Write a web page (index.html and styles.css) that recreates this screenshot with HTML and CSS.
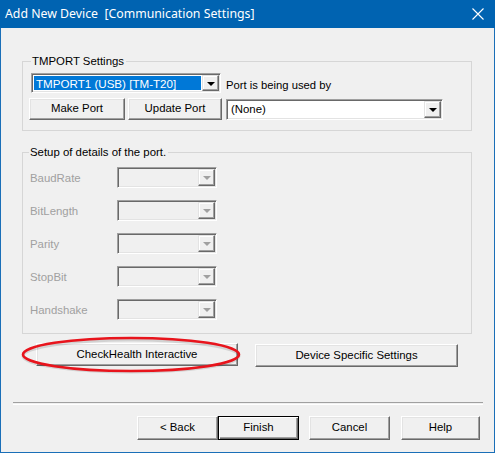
FILE: index.html
```html
<!DOCTYPE html>
<html>
<head>
<meta charset="utf-8">
<link rel="stylesheet" href="styles.css">
</head>
<body>
<div class="window">
  <div class="titlebar">
    <span class="title">Add New Device&nbsp; [Communication Settings]</span>
    <svg class="close" width="12" height="12" viewBox="0 0 12 12"><path d="M0.5 0.5 L11.5 11.5 M11.5 0.5 L0.5 11.5" stroke="#fff" stroke-width="1.1" fill="none"/></svg>
  </div>
  <div class="client">
    <fieldset class="group g1">
      <legend>TMPORT Settings</legend>
      <div class="row r1">
        <div class="combo port"><span class="sel">TMPORT1 (USB) [TM-T20]</span><span class="drop"><i class="tri"></i></span></div>
        <span class="lbl">Port is being used by</span>
      </div>
      <div class="row r2">
        <button class="btn make">Make Port</button>
        <button class="btn update">Update Port</button>
        <div class="combo none"><span class="val">(None)</span><span class="drop"><i class="tri"></i></span></div>
      </div>
    </fieldset>
    <fieldset class="group g2">
      <legend>Setup of details of the port.</legend>
      <div class="prow"><span class="plabel">BaudRate</span><div class="combo dis"><span class="val"></span><span class="drop"><i class="tri"></i></span></div></div>
      <div class="prow"><span class="plabel">BitLength</span><div class="combo dis"><span class="val"></span><span class="drop"><i class="tri"></i></span></div></div>
      <div class="prow"><span class="plabel">Parity</span><div class="combo dis"><span class="val"></span><span class="drop"><i class="tri"></i></span></div></div>
      <div class="prow"><span class="plabel">StopBit</span><div class="combo dis"><span class="val"></span><span class="drop"><i class="tri"></i></span></div></div>
      <div class="prow"><span class="plabel">Handshake</span><div class="combo dis"><span class="val"></span><span class="drop"><i class="tri"></i></span></div></div>
    </fieldset>
    <div class="actions">
      <div class="hl">
        <button class="btn wide check">CheckHealth Interactive</button>
        <svg class="ring" width="224" height="40" viewBox="0 0 224 40"><ellipse cx="112" cy="21" rx="108" ry="16" fill="none" stroke="rgba(0,0,0,0.12)" stroke-width="3"/><ellipse cx="112" cy="19.5" rx="108" ry="16.5" fill="none" stroke="#e8141c" stroke-width="2.6"/></svg>
      </div>
      <button class="btn wide dev">Device Specific Settings</button>
    </div>
    <div class="sep"></div>
    <div class="footer">
      <button class="btn fbtn">&lt; Back</button>
      <button class="btn fbtn default">Finish</button>
      <button class="btn fbtn cancel">Cancel</button>
      <button class="btn fbtn help">Help</button>
    </div>
  </div>
</div>
</body>
</html>
```

FILE: styles.css
```css
html, body {
  margin: 0;
  padding: 0;
  background: #ffffff;
}
body {
  width: 495px;
  height: 454px;
  overflow: hidden;
}
.window {
  width: 493px;
  height: 452px;
  border: 1px solid #1a6fb8;
  border-top: none;
  background: #f0f0f0;
  display: flex;
  flex-direction: column;
  font-family: "Liberation Sans", Arial, sans-serif;
  font-size: 11.4px;
  color: #000;
}
.titlebar {
  height: 28px;
  margin: 0 -1px;
  background: #0063b1;
  display: flex;
  align-items: center;
  justify-content: space-between;
  padding: 0 11px 0 5px;
  flex-shrink: 0;
}
.title {
  font-family: "Noto Sans", "Open Sans", sans-serif;
  font-size: 12.3px;
  color: #fff;
  margin-top: -1px;
}
.close {
  display: block;
}
.client {
  padding: 0 0 0 21px;
  display: flex;
  flex-direction: column;
  flex: 1;
}
.group {
  margin: 0;
  padding: 0 8px;
  border: 1px solid #d6d6d6;
  box-sizing: border-box;
  width: 450px;
}
.group legend {
  padding: 0 2px 0 1px;
  line-height: 13px;
  font-size: 11.4px;
}
.g1 {
  margin-top: 27px;
  padding-top: 5px;
  padding-bottom: 10px;
}
.g2 {
  margin-top: 15px;
  padding-top: 8px;
  padding-bottom: 13px;
}
.g2 legend {
  margin-left: -2px;
}
.row {
  display: flex;
  align-items: center;
}
.r2 {
  margin-top: 5px;
}
.combo {
  display: flex;
  box-sizing: border-box;
  border: 1px solid;
  border-color: #a0a0a0 #ffffff #ffffff #a0a0a0;
  box-shadow: inset 1px 1px 0 #696969, inset -1px -1px 0 #e3e3e3;
  background: #fff;
  padding: 2px;
}
.combo .sel, .combo .val {
  flex: 1;
  display: flex;
  align-items: center;
  padding-left: 2px;
  white-space: nowrap;
  overflow: hidden;
}
.combo .sel {
  background: #0078d7;
  color: #fff;
  margin-right: 1px;
  font-size: 11.6px;
}
.drop {
  width: 17px;
  flex-shrink: 0;
  box-sizing: border-box;
  background: #f0f0f0;
  border: 1px solid;
  border-color: #e3e3e3 #696969 #696969 #e3e3e3;
  box-shadow: inset -1px -1px 0 #a0a0a0, inset 1px 1px 0 #ffffff;
  display: flex;
  align-items: center;
  justify-content: center;
  margin: -1px -1px -1px 0;
}
.tri {
  width: 0;
  height: 0;
  border-left: 4px solid transparent;
  border-right: 4px solid transparent;
  border-top: 4px solid #000;
  margin-top: 1px;
}
.port {
  width: 190px;
  height: 20px;
}
.lbl {
  margin-left: 5px;
  margin-top: 3px;
  font-size: 11.25px;
}
.btn {
  font-family: "Liberation Sans", Arial, sans-serif;
  font-size: 11.4px;
  color: #000;
  background: #f0f0f0;
  box-sizing: border-box;
  border: 1px solid;
  border-color: #ffffff #696969 #696969 #ffffff;
  box-shadow: inset -1px -1px 0 #a0a0a0, inset 1px 1px 0 #e3e3e3;
  padding: 0;
  margin: 0;
  line-height: 1;
}
.make {
  width: 96px;
  height: 22px;
  margin-left: -2px;
}
.update {
  width: 94px;
  height: 22px;
  margin-left: 3px;
}
.none {
  width: 217px;
  height: 21px;
  margin-left: 4px;
}
.prow {
  display: flex;
  align-items: center;
  height: 21px;
  margin-bottom: 12px;
}
.prow:last-child {
  margin-bottom: 0;
}
.plabel {
  width: 87px;
  margin-left: -1px;
  color: #a0a0a0;
  padding-top: 1px;
  font-size: 11.4px;
}
.combo.dis {
  width: 100px;
  height: 21px;
  background: #f0f0f0;
}
.combo.dis .tri {
  border-top-color: #a0a0a0;
}
.actions {
  display: flex;
  align-items: flex-start;
  margin-top: 9px;
}
.hl {
  position: relative;
  margin-left: 14px;
}
.btn.wide {
  height: 23px;
}
.check {
  width: 202px;
}
.dev {
  width: 203px;
  margin-left: 17px;
  margin-top: 1px;
  height: 22px;
}
.ring {
  position: absolute;
  left: -17px;
  top: -8px;
  pointer-events: none;
}
.sep {
  margin: 35px 0 0 -9px;
  width: 470px;
  height: 1px;
  border-top: 1px solid #a0a0a0;
  border-bottom: 1px solid #ffffff;
}
.footer {
  display: flex;
  margin-top: 11px;
  padding-left: 115px;
}
.fbtn {
  width: 81px;
  height: 24px;
}
.default {
  border: 1px solid #000;
  box-shadow: inset 1px 1px 0 #ffffff, inset -1px -1px 0 #696969, inset -2px -2px 0 #a0a0a0;
}
.cancel {
  margin-left: 10px;
}
.help {
  margin-left: 11px;
  width: 79px;
}
```
